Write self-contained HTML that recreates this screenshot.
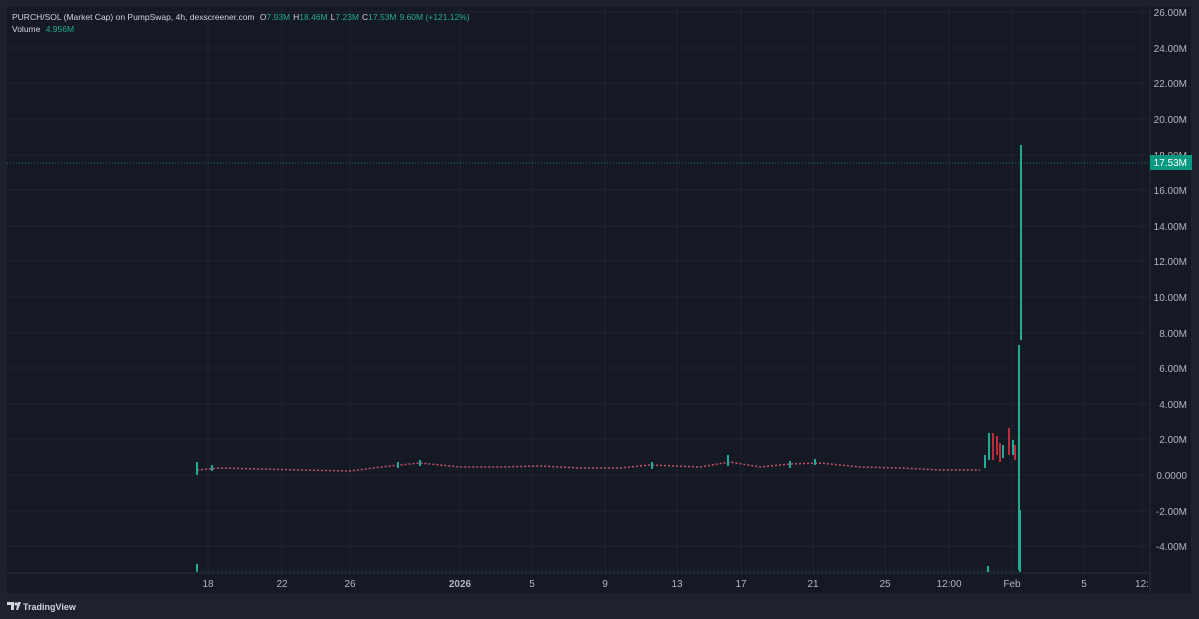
<!DOCTYPE html>
<html><head><meta charset="utf-8"><style>
html,body{margin:0;padding:0;background:#1e222d;width:1199px;height:619px;overflow:hidden;font-family:"Liberation Sans",sans-serif}
svg{display:block}
</style></head><body>
<svg width="1199" height="619" xmlns="http://www.w3.org/2000/svg" font-family="Liberation Sans, sans-serif">
<rect width="1199" height="619" fill="#1e222d"/>
<rect x="7" y="7" width="1186" height="586" fill="#151924"/>
<line x1="1192" y1="7" x2="1192" y2="593" stroke="#2a2e39"/>
<g stroke="#1f2431" stroke-width="1">
<line x1="7" y1="12" x2="1150" y2="12"/><line x1="7" y1="48" x2="1150" y2="48"/><line x1="7" y1="83" x2="1150" y2="83"/><line x1="7" y1="119" x2="1150" y2="119"/><line x1="7" y1="155" x2="1150" y2="155"/><line x1="7" y1="190" x2="1150" y2="190"/><line x1="7" y1="226" x2="1150" y2="226"/><line x1="7" y1="261" x2="1150" y2="261"/><line x1="7" y1="297" x2="1150" y2="297"/><line x1="7" y1="333" x2="1150" y2="333"/><line x1="7" y1="368" x2="1150" y2="368"/><line x1="7" y1="404" x2="1150" y2="404"/><line x1="7" y1="439" x2="1150" y2="439"/><line x1="7" y1="475" x2="1150" y2="475"/><line x1="7" y1="511" x2="1150" y2="511"/><line x1="7" y1="546" x2="1150" y2="546"/>
<line x1="208" y1="7" x2="208" y2="573"/><line x1="282" y1="7" x2="282" y2="573"/><line x1="350" y1="7" x2="350" y2="573"/><line x1="460" y1="7" x2="460" y2="573"/><line x1="532" y1="7" x2="532" y2="573"/><line x1="605" y1="7" x2="605" y2="573"/><line x1="677" y1="7" x2="677" y2="573"/><line x1="741" y1="7" x2="741" y2="573"/><line x1="813" y1="7" x2="813" y2="573"/><line x1="885" y1="7" x2="885" y2="573"/><line x1="949" y1="7" x2="949" y2="573"/><line x1="1012" y1="7" x2="1012" y2="573"/><line x1="1084" y1="7" x2="1084" y2="573"/><line x1="1142" y1="7" x2="1142" y2="573"/>
</g>
<line x1="7" y1="573" x2="1150" y2="573" stroke="#2a2e39"/>
<line x1="1150" y1="7" x2="1150" y2="593" stroke="#2a2e39"/>
<line x1="7" y1="163" x2="1150" y2="163" stroke="#089981" stroke-dasharray="1 2" opacity="0.8"/>
<!-- baseline candles -->
<polyline fill="none" stroke="#c8506a" stroke-width="1.5" stroke-dasharray="2 2" points="197,470 220,468 260,469 300,470 350,471 390,466 420,463 460,467 500,467 540,466 580,468 620,468 650,465 700,467 730,462 760,467 790,464 820,463 860,467 900,468 940,470 980,470"/>
<g stroke="#22ab94" stroke-width="2">
<line x1="197" y1="462" x2="197" y2="475"/><line x1="212" y1="465" x2="212" y2="471"/><line x1="398" y1="462" x2="398" y2="468"/><line x1="420" y1="460" x2="420" y2="466"/><line x1="652" y1="462" x2="652" y2="469"/><line x1="728" y1="455" x2="728" y2="466"/><line x1="790" y1="461" x2="790" y2="468"/><line x1="815" y1="459" x2="815" y2="465"/>
<line x1="985" y1="455" x2="985" y2="468"/><line x1="989" y1="433" x2="989" y2="460"/><line x1="1003" y1="445" x2="1003" y2="458"/><line x1="1013" y1="440" x2="1013" y2="455"/>
<line x1="1019" y1="345" x2="1019" y2="570"/><line x1="1021" y1="145" x2="1021" y2="340"/>
</g>
<g stroke="#f23645" stroke-width="1.5">
<line x1="993" y1="433" x2="993" y2="460"/><line x1="997" y1="436" x2="997" y2="455"/><line x1="1000" y1="443" x2="1000" y2="462"/><line x1="1009" y1="428" x2="1009" y2="455"/><line x1="1015" y1="445" x2="1015" y2="460"/>
</g>
<!-- volume -->
<g stroke="#22ab94" stroke-width="2"><line x1="197" y1="564" x2="197" y2="572"/><line x1="988" y1="566" x2="988" y2="572"/><line x1="1020" y1="510" x2="1020" y2="572"/></g>
<line x1="197" y1="571" x2="1015" y2="571" stroke="#3a5a55" stroke-dasharray="1 3"/>
<!-- axis labels -->
<g fill="#b2b5be" font-size="10" text-anchor="end">
<text x="1187" y="16">26.00M</text><text x="1187" y="52">24.00M</text><text x="1187" y="87">22.00M</text><text x="1187" y="123">20.00M</text><text x="1187" y="159">18.00M</text><text x="1187" y="194">16.00M</text><text x="1187" y="230">14.00M</text><text x="1187" y="265">12.00M</text><text x="1187" y="301">10.00M</text><text x="1187" y="337">8.00M</text><text x="1187" y="372">6.00M</text><text x="1187" y="408">4.00M</text><text x="1187" y="443">2.00M</text><text x="1187" y="479">0.0000</text><text x="1187" y="515">-2.00M</text><text x="1187" y="550">-4.00M</text>
</g>
<rect x="1150" y="155" width="42" height="15" fill="#089981"/>
<text x="1187" y="166" fill="#fff" font-size="10" text-anchor="end">17.53M</text>
<g fill="#b2b5be" font-size="10" text-anchor="middle">
<text x="208" y="587">18</text><text x="282" y="587">22</text><text x="350" y="587">26</text><text x="460" y="587" font-weight="bold">2026</text><text x="532" y="587">5</text><text x="605" y="587">9</text><text x="677" y="587">13</text><text x="741" y="587">17</text><text x="813" y="587">21</text><text x="885" y="587">25</text><text x="949" y="587">12:00</text><text x="1012" y="587">Feb</text><text x="1084" y="587">5</text><text x="1142" y="587">12:</text>
</g>
<text x="12" y="20" font-size="8.5" fill="#d1d4dc">PURCH/SOL (Market Cap) on PumpSwap, 4h, dexscreener.com <tspan dx="3">O</tspan><tspan fill="#22ab94">7.93M</tspan><tspan dx="3">H</tspan><tspan fill="#22ab94">18.46M</tspan><tspan dx="3">L</tspan><tspan fill="#22ab94">7.23M</tspan><tspan dx="3">C</tspan><tspan fill="#22ab94">17.53M</tspan><tspan dx="3" fill="#22ab94">9.60M (+121.12%)</tspan></text>
<text x="12" y="32" font-size="8.5" fill="#d1d4dc">Volume <tspan dx="3" fill="#22ab94">4.956M</tspan></text>
<g fill="#d1d4dc"><path d="M7 602h7v8h-3v-5h-4z"/><circle cx="16" cy="604" r="1.6"/><path d="M18 602h3l-3 8h-2z"/></g>
<text x="23" y="610" font-size="9" fill="#d1d4dc" font-weight="bold">TradingView</text>
</svg>
</body></html>
